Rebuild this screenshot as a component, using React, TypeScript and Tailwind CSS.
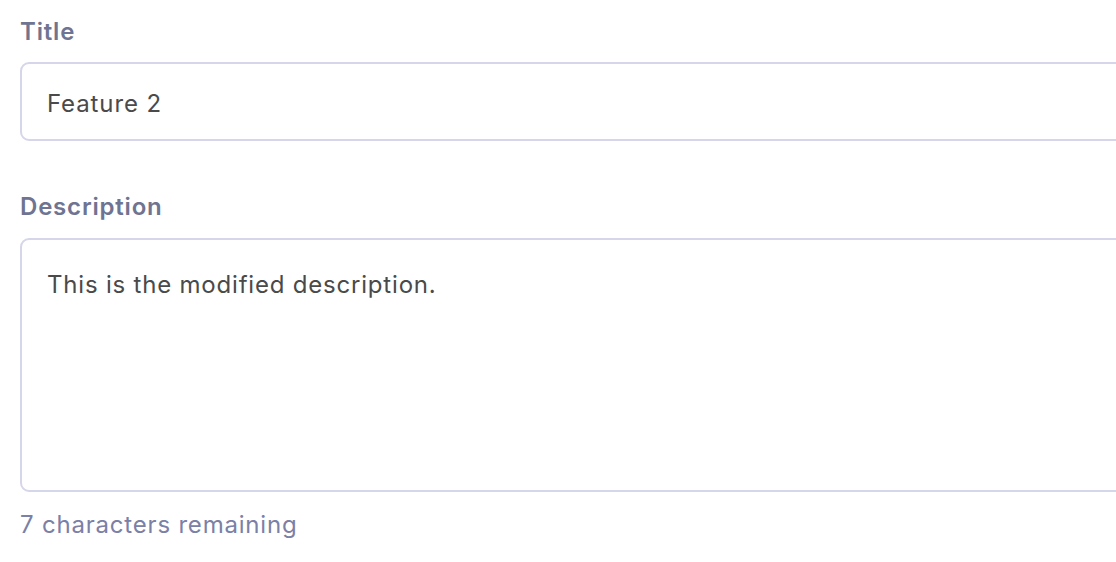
import React, { useState } from 'react';

const MAX = 40;

export default function App() {
  const [title, setTitle] = useState('Feature 2');
  const [description, setDescription] = useState('This is the modified description.');

  return (
    <div
      className="w-[1116px] h-[562px] overflow-hidden bg-white tracking-[0.8px]"
      style={{ fontFamily: 'Inter, Lato, sans-serif' }}
    >
      <div className="w-[1160px] pl-5 pt-[15px]">
        <label className="block text-[24px] leading-[34px] font-semibold text-[#6e7491]">Title</label>
        <input
          value={title}
          onChange={e => setTitle(e.target.value)}
          className="mt-[13px] block w-full h-[79px] rounded-[9px] border-2 border-[#d6d6ea] px-[25px] pt-[3px] text-[24px] tracking-[0.9px] text-[#4a4a4a] outline-none"
        />

        <label className="mt-[49px] block text-[24px] leading-[34px] font-semibold text-[#6e7491]">Description</label>
        <textarea
          value={description}
          onChange={e => setDescription(e.target.value)}
          className="mt-[14px] block w-full h-[254px] resize-none rounded-[9px] border-2 border-[#d6d6ea] px-[25px] pt-[28px] text-[24px] leading-[34px] tracking-[0.8px] text-[#4a4a4a] outline-none"
        />
        <p className="mt-[16px] text-[24px] leading-[34px] text-[#7a80a6]">
          {MAX - description.length} characters remaining
        </p>
      </div>
    </div>
  );
}
